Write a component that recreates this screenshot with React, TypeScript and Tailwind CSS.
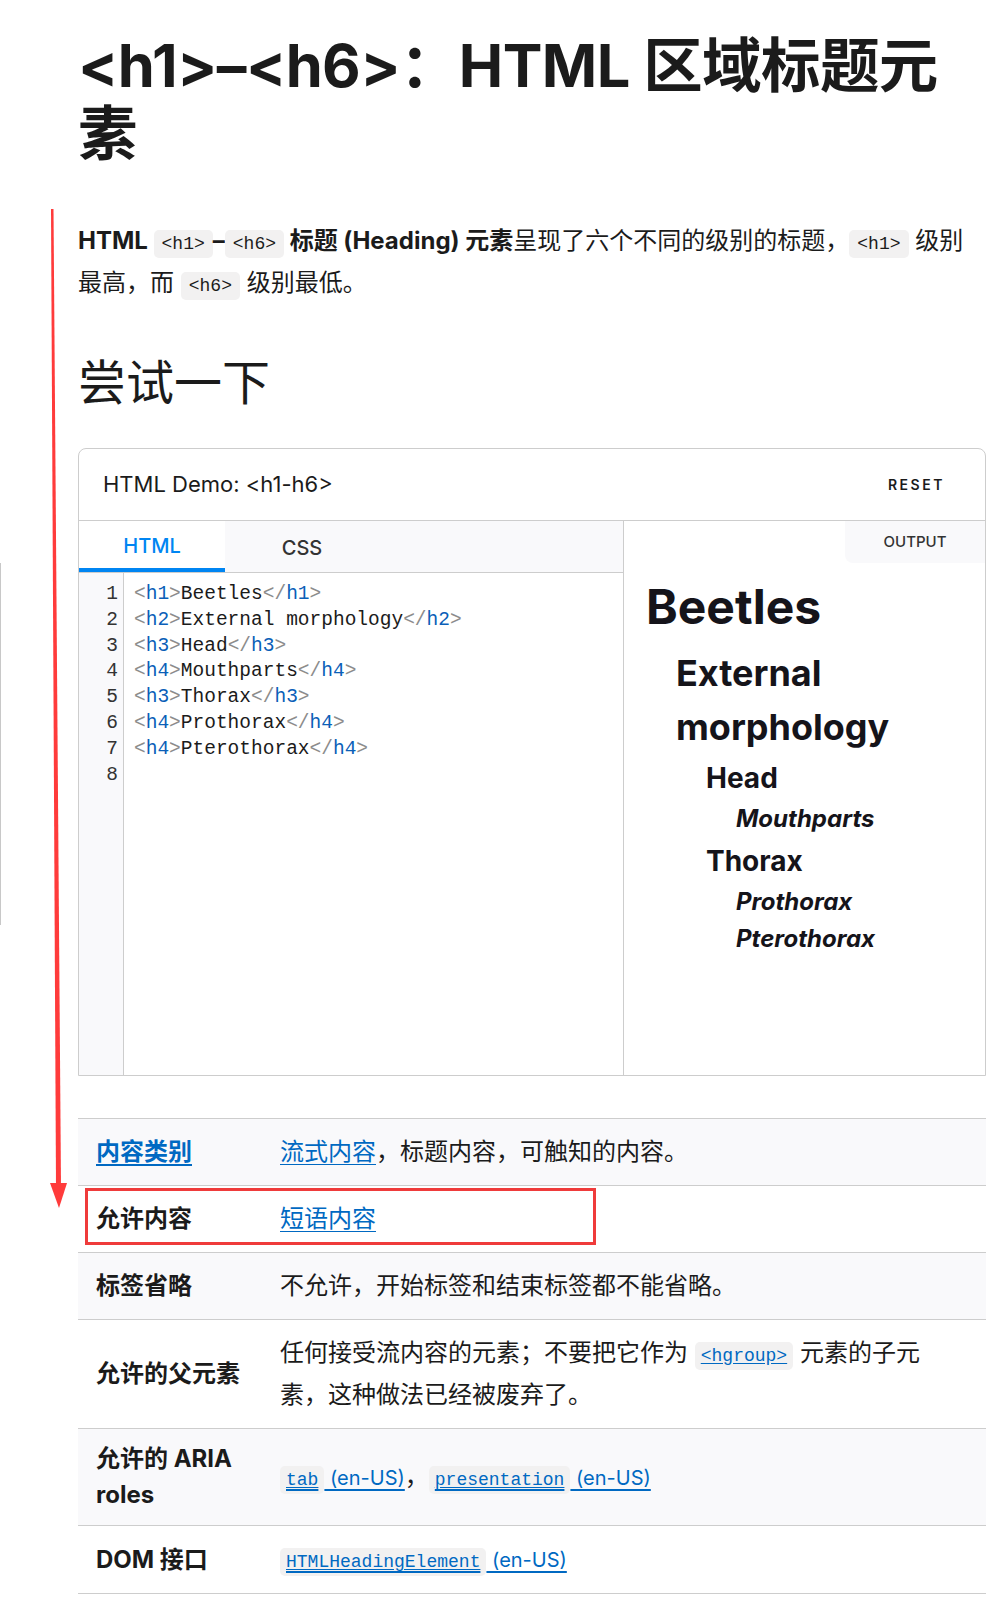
import React from 'react';

const sans = "font-['Inter','Noto_Sans_CJK_SC',sans-serif]";
const mono = "font-['Liberation_Mono','Noto_Sans_CJK_SC',monospace]";

const codeLines: [string, string][] = [
  ['h1', 'Beetles'],
  ['h2', 'External morphology'],
  ['h3', 'Head'],
  ['h4', 'Mouthparts'],
  ['h3', 'Thorax'],
  ['h4', 'Prothorax'],
  ['h4', 'Pterothorax'],
];

const Chip = ({ children, link = false, wide = false }: { children: React.ReactNode; link?: boolean; wide?: boolean }) => (
  <code
    className={`${mono} text-[18px] leading-[20px] bg-[#f2f1f1] rounded-[5px] py-[4px] ${wide ? 'px-[8px]' : 'px-[6px]'} ${
      link ? 'text-[#0069c2] underline underline-offset-2' : 'text-[#1b1b1b]'
    }`}
  >
    {children}
  </code>
);

const TagLine = ({ tag, text }: { tag: string; text: string }) => (
  <div className="whitespace-pre">
    <span className="text-[#8c8c8c]">&lt;</span>
    <span className="text-[#0b5fb8]">{tag}</span>
    <span className="text-[#8c8c8c]">&gt;</span>
    <span className="text-[#1b1b1b]">{text}</span>
    <span className="text-[#8c8c8c]">&lt;/</span>
    <span className="text-[#0b5fb8]">{tag}</span>
    <span className="text-[#8c8c8c]">&gt;</span>
  </div>
);

const Link = ({ children }: { children: React.ReactNode }) => (
  <a className="text-[#0069c2] underline underline-offset-4 decoration-1">{children}</a>
);

const EnUs = () => <span className="text-[20px]"> (en-US)</span>;

export default function App() {
  return (
    <div className={`relative w-[1005px] min-h-[1619px] bg-white overflow-hidden ${sans} text-[#1b1b1b]`}>
      {/* stray window edge on the far left */}
      <div className="absolute left-0 top-[563px] h-[362px] w-px bg-[#c8c8c8]" />

      {/* red annotation arrow */}
      <svg className="absolute left-0 top-0 pointer-events-none" width="80" height="1619" viewBox="0 0 80 1619">
        <polygon points="51,209 53.5,209 61,1186 56,1186" fill="#ff3b3b" />
        <polygon points="50,1183 67,1183 59,1208" fill="#ff3b3b" />
      </svg>

      {/* red box around 允许内容 row */}
      <div className="absolute left-[85px] top-[1188px] w-[511px] h-[57px] border-[3px] border-[#ef3b3b] pointer-events-none z-10" />

      <div className="w-[986px] pl-[78px] pt-[31px]">
        <h1 className="text-[59.5px] leading-[68px] font-bold tracking-[-0.01em]">
          &lt;h1&gt;–&lt;h6&gt;：HTML 区域标题元
          <br />素
        </h1>

        <p className="mt-[53px] text-[24px] leading-[42px]">
          <b className="font-bold">HTML </b>
          <Chip wide>&lt;h1&gt;</Chip>
          <b className="font-bold">–</b>
          <Chip wide>&lt;h6&gt;</Chip>
          <b className="font-bold"> 标题 (Heading) 元素</b>呈现了六个不同的级别的标题，<Chip wide>&lt;h1&gt;</Chip> 级别
          <br />
          最高，而 <Chip wide>&lt;h6&gt;</Chip> 级别最低。
        </p>

        <h2 className="mt-[50px] text-[48px] leading-[58px] font-normal">尝试一下</h2>

        {/* interactive demo */}
        <div className="mt-[36px] border border-[#cdcdcd] rounded-t-[8px] overflow-hidden">
          <div className="h-[72px] border-b border-[#cdcdcd] flex items-center justify-between pl-[24px] pr-[40px]">
            <span className="text-[22px]">HTML Demo: &lt;h1-h6&gt;</span>
            <span className="text-[14px] font-semibold tracking-[0.18em]">RESET</span>
          </div>

          <div className="flex h-[554px]">
            <div className="w-[545px] border-r border-[#cdcdcd] flex flex-col">
              <div className="h-[52px] bg-[#f9f9fb] border-b border-[#cdcdcd] flex">
                <div className="w-[146px] bg-white flex flex-col">
                  <div className="flex-1 flex items-center justify-center pt-[3px] text-[20px] font-medium text-[#0085f2]">HTML</div>
                  <div className="h-[4px] bg-[#0085f2]" />
                </div>
                <div className="w-[154px] flex items-center justify-center pt-[2px] text-[20px] font-medium text-[#333]">CSS</div>
              </div>
              <div className={`flex-1 flex ${mono} text-[19.5px] leading-[25.8px]`}>
                <div className="w-[45px] bg-[#f9f9fb] border-r border-[#cdcdcd] pt-[9px] pr-[5px] text-right text-[#333]">
                  {[1, 2, 3, 4, 5, 6, 7, 8].map((n) => (
                    <div key={n}>{n}</div>
                  ))}
                </div>
                <div className="flex-1 pt-[9px] pl-[10px]">
                  {codeLines.map(([t, s], i) => (
                    <TagLine key={i} tag={t} text={s} />
                  ))}
                </div>
              </div>
            </div>

            <div className="flex-1 flex flex-col text-[#15141a]">
              <div className="flex justify-end">
                <div className="w-[140px] h-[42px] bg-[#f9f9fb] rounded-bl-[8px] flex items-center justify-center text-[15px] font-medium text-[#333]">
                  OUTPUT
                </div>
              </div>
              <div className="pl-[22px] pr-[20px] pt-[15px] font-bold">
                <div className="text-[48px] leading-[58px]">Beetles</div>
                <div className="mt-[10px] ml-[30px] text-[36px] leading-[54px]">External morphology</div>
                <div className="mt-[6px] ml-[60px] text-[28px] leading-[36px]">Head</div>
                <div className="mt-[7px] ml-[90px] text-[24px] leading-[32px] italic">Mouthparts</div>
                <div className="mt-[8px] ml-[60px] text-[28px] leading-[36px]">Thorax</div>
                <div className="mt-[7px] ml-[90px] text-[24px] leading-[32px] italic">Prothorax</div>
                <div className="mt-[5px] ml-[90px] text-[24px] leading-[32px] italic">Pterothorax</div>
              </div>
            </div>
          </div>
        </div>

        {/* properties table */}
        <table className="mt-[42px] w-[908px] border-collapse text-[24px]">
          <tbody>
            <tr className="bg-[#f9f9fb] border-y border-[#cdcdcd]">
              <th className="w-[184px] px-[18px] py-3 text-left align-middle font-bold leading-[36px]">
                <a className="text-[#0069c2] underline underline-offset-4">内容类别</a>
              </th>
              <td className="px-[18px] py-3 leading-[42px]">
                <Link>流式内容</Link>，标题内容，可触知的内容。
              </td>
            </tr>
            <tr className="border-y border-[#cdcdcd]">
              <th className="px-[18px] py-3 text-left font-bold leading-[36px]">允许内容</th>
              <td className="px-[18px] py-3 leading-[42px]">
                <Link>短语内容</Link>
              </td>
            </tr>
            <tr className="bg-[#f9f9fb] border-y border-[#cdcdcd]">
              <th className="px-[18px] py-3 text-left font-bold leading-[36px]">标签省略</th>
              <td className="px-[18px] py-3 leading-[42px]">不允许，开始标签和结束标签都不能省略。</td>
            </tr>
            <tr className="border-y border-[#cdcdcd]">
              <th className="px-[18px] py-3 text-left font-bold leading-[36px]">允许的父元素</th>
              <td className="px-[18px] py-3 leading-[42px]">
                任何接受流内容的元素；不要把它作为 <Chip link>&lt;hgroup&gt;</Chip> 元素的子元
                <br />
                素，这种做法已经被废弃了。
              </td>
            </tr>
            <tr className="bg-[#f9f9fb] border-y border-[#cdcdcd]">
              <th className="px-[18px] py-3 text-left font-bold leading-[36px]">允许的 ARIA roles</th>
              <td className="px-[18px] py-3 leading-[42px]">
                <a className="text-[#0069c2] underline underline-offset-4">
                  <Chip link>tab</Chip>
                  <EnUs />
                </a>
                ，
                <a className="text-[#0069c2] underline underline-offset-4">
                  <Chip link>presentation</Chip>
                  <EnUs />
                </a>
              </td>
            </tr>
            <tr className="border-y border-[#cdcdcd]">
              <th className="px-[18px] py-3 text-left font-bold leading-[36px]">DOM 接口</th>
              <td className="px-[18px] py-3 leading-[42px]">
                <a className="text-[#0069c2] underline underline-offset-4">
                  <Chip link>HTMLHeadingElement</Chip>
                  <EnUs />
                </a>
              </td>
            </tr>
          </tbody>
        </table>
      </div>
    </div>
  );
}
